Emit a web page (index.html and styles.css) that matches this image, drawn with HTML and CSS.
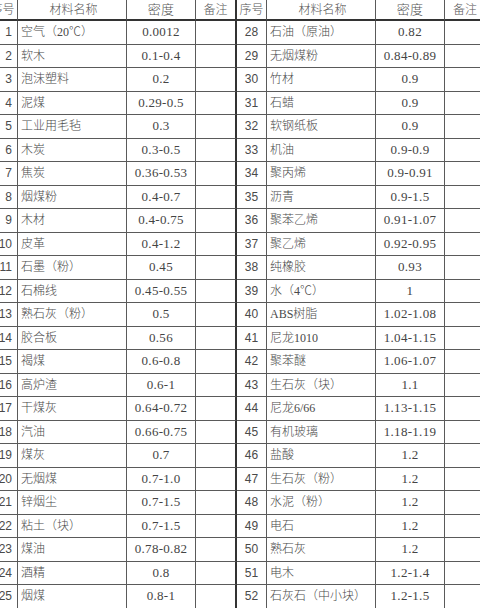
FILE: index.html
```html
<!DOCTYPE html>
<html lang="zh-CN">
<head>
<meta charset="utf-8">
<title>材料密度表</title>
<link rel="stylesheet" href="styles.css">
</head>
<body>
<div class="sheet">
  <div class="row head">
    <div class="c seq">序号</div><div class="c name">材料名称</div><div class="c den">密度</div><div class="c note mid">备注</div>
    <div class="c seq">序号</div><div class="c name">材料名称</div><div class="c den">密度</div><div class="c note">备注</div>
  </div>
  <div class="row"><div class="c seq l">1</div><div class="c name">空气（20℃）</div><div class="c den">0.0012</div><div class="c note mid"></div><div class="c seq">28</div><div class="c name">石油（原油）</div><div class="c den">0.82</div><div class="c note"></div></div>
  <div class="row"><div class="c seq l">2</div><div class="c name">软木</div><div class="c den">0.1-0.4</div><div class="c note mid"></div><div class="c seq">29</div><div class="c name">无烟煤粉</div><div class="c den">0.84-0.89</div><div class="c note"></div></div>
  <div class="row"><div class="c seq l">3</div><div class="c name">泡沫塑料</div><div class="c den">0.2</div><div class="c note mid"></div><div class="c seq">30</div><div class="c name">竹材</div><div class="c den">0.9</div><div class="c note"></div></div>
  <div class="row"><div class="c seq l">4</div><div class="c name">泥煤</div><div class="c den">0.29-0.5</div><div class="c note mid"></div><div class="c seq">31</div><div class="c name">石蜡</div><div class="c den">0.9</div><div class="c note"></div></div>
  <div class="row"><div class="c seq l">5</div><div class="c name">工业用毛毡</div><div class="c den">0.3</div><div class="c note mid"></div><div class="c seq">32</div><div class="c name">软钢纸板</div><div class="c den">0.9</div><div class="c note"></div></div>
  <div class="row"><div class="c seq l">6</div><div class="c name">木炭</div><div class="c den">0.3-0.5</div><div class="c note mid"></div><div class="c seq">33</div><div class="c name">机油</div><div class="c den">0.9-0.9</div><div class="c note"></div></div>
  <div class="row"><div class="c seq l">7</div><div class="c name">焦炭</div><div class="c den">0.36-0.53</div><div class="c note mid"></div><div class="c seq">34</div><div class="c name">聚丙烯</div><div class="c den">0.9-0.91</div><div class="c note"></div></div>
  <div class="row"><div class="c seq l">8</div><div class="c name">烟煤粉</div><div class="c den">0.4-0.7</div><div class="c note mid"></div><div class="c seq">35</div><div class="c name">沥青</div><div class="c den">0.9-1.5</div><div class="c note"></div></div>
  <div class="row"><div class="c seq l">9</div><div class="c name">木材</div><div class="c den">0.4-0.75</div><div class="c note mid"></div><div class="c seq">36</div><div class="c name">聚苯乙烯</div><div class="c den">0.91-1.07</div><div class="c note"></div></div>
  <div class="row"><div class="c seq l">10</div><div class="c name">皮革</div><div class="c den">0.4-1.2</div><div class="c note mid"></div><div class="c seq">37</div><div class="c name">聚乙烯</div><div class="c den">0.92-0.95</div><div class="c note"></div></div>
  <div class="row"><div class="c seq l">11</div><div class="c name">石墨（粉）</div><div class="c den">0.45</div><div class="c note mid"></div><div class="c seq">38</div><div class="c name">纯橡胶</div><div class="c den">0.93</div><div class="c note"></div></div>
  <div class="row"><div class="c seq l">12</div><div class="c name">石棉线</div><div class="c den">0.45-0.55</div><div class="c note mid"></div><div class="c seq">39</div><div class="c name">水（4℃）</div><div class="c den">1</div><div class="c note"></div></div>
  <div class="row"><div class="c seq l">13</div><div class="c name">熟石灰（粉）</div><div class="c den">0.5</div><div class="c note mid"></div><div class="c seq">40</div><div class="c name">ABS树脂</div><div class="c den">1.02-1.08</div><div class="c note"></div></div>
  <div class="row"><div class="c seq l">14</div><div class="c name">胶合板</div><div class="c den">0.56</div><div class="c note mid"></div><div class="c seq">41</div><div class="c name">尼龙1010</div><div class="c den">1.04-1.15</div><div class="c note"></div></div>
  <div class="row"><div class="c seq l">15</div><div class="c name">褐煤</div><div class="c den">0.6-0.8</div><div class="c note mid"></div><div class="c seq">42</div><div class="c name">聚苯醚</div><div class="c den">1.06-1.07</div><div class="c note"></div></div>
  <div class="row"><div class="c seq l">16</div><div class="c name">高炉渣</div><div class="c den">0.6-1</div><div class="c note mid"></div><div class="c seq">43</div><div class="c name">生石灰（块）</div><div class="c den">1.1</div><div class="c note"></div></div>
  <div class="row"><div class="c seq l">17</div><div class="c name">干煤灰</div><div class="c den">0.64-0.72</div><div class="c note mid"></div><div class="c seq">44</div><div class="c name">尼龙6/66</div><div class="c den">1.13-1.15</div><div class="c note"></div></div>
  <div class="row"><div class="c seq l">18</div><div class="c name">汽油</div><div class="c den">0.66-0.75</div><div class="c note mid"></div><div class="c seq">45</div><div class="c name">有机玻璃</div><div class="c den">1.18-1.19</div><div class="c note"></div></div>
  <div class="row"><div class="c seq l">19</div><div class="c name">煤灰</div><div class="c den">0.7</div><div class="c note mid"></div><div class="c seq">46</div><div class="c name">盐酸</div><div class="c den">1.2</div><div class="c note"></div></div>
  <div class="row"><div class="c seq l">20</div><div class="c name">无烟煤</div><div class="c den">0.7-1.0</div><div class="c note mid"></div><div class="c seq">47</div><div class="c name">生石灰（粉）</div><div class="c den">1.2</div><div class="c note"></div></div>
  <div class="row"><div class="c seq l">21</div><div class="c name">锌烟尘</div><div class="c den">0.7-1.5</div><div class="c note mid"></div><div class="c seq">48</div><div class="c name">水泥（粉）</div><div class="c den">1.2</div><div class="c note"></div></div>
  <div class="row"><div class="c seq l">22</div><div class="c name">粘土（块）</div><div class="c den">0.7-1.5</div><div class="c note mid"></div><div class="c seq">49</div><div class="c name">电石</div><div class="c den">1.2</div><div class="c note"></div></div>
  <div class="row"><div class="c seq l">23</div><div class="c name">煤油</div><div class="c den">0.78-0.82</div><div class="c note mid"></div><div class="c seq">50</div><div class="c name">熟石灰</div><div class="c den">1.2</div><div class="c note"></div></div>
  <div class="row"><div class="c seq l">24</div><div class="c name">酒精</div><div class="c den">0.8</div><div class="c note mid"></div><div class="c seq">51</div><div class="c name">电木</div><div class="c den">1.2-1.4</div><div class="c note"></div></div>
  <div class="row"><div class="c seq l">25</div><div class="c name">烟煤</div><div class="c den">0.8-1</div><div class="c note mid"></div><div class="c seq">52</div><div class="c name">石灰石（中小块）</div><div class="c den">1.2-1.5</div><div class="c note"></div></div>
</div>
</body>
</html>
```

FILE: styles.css
```css
html, body {
  margin: 0;
  padding: 0;
  background: #ffffff;
  overflow: hidden;
}
body {
  width: 480px;
  height: 608px;
  font-family: "Liberation Serif", "Noto Sans CJK SC", serif;
  color: #444444;
}
.sheet {
  width: 498px;
  margin-left: -12px;
}
.row {
  display: grid;
  grid-template-columns: 30px 109px 69px 41px 30px 109px 69px 41px;
  height: 23.5px;
}
.row.head {
  height: 21px;
}
.c {
  box-sizing: border-box;
  border-right: 1px solid #5a5a5a;
  border-bottom: 1px solid #5a5a5a;
  display: flex;
  align-items: center;
  font-size: 12px;
  line-height: 14px;
  white-space: nowrap;
  overflow: hidden;
}
.head .c {
  border-bottom: 2px solid #333333;
  justify-content: center;
  padding-bottom: 2px;
  font-family: "Noto Sans CJK SC", sans-serif;
  font-weight: 300;
  color: #555555;
}
.mid {
  border-right: 2px solid #333333;
}
.seq {
  justify-content: center;
  font-size: 12px;
  font-family: "Liberation Sans", "Noto Sans CJK SC", sans-serif;
  color: #4a4a4a;
}
.seq.l {
  justify-content: flex-end;
  padding-right: 5px;
}
.name {
  padding-left: 3px;
  font-family: "Liberation Serif", "Noto Sans CJK SC", serif;
  font-weight: 300;
  color: #4a4a4a;
}
.den {
  justify-content: center;
  font-size: 13px;
  letter-spacing: 0.3px;
}
```
